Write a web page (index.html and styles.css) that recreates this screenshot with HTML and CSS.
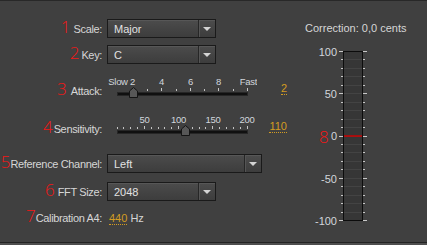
FILE: index.html
```html
<!DOCTYPE html>
<html>
	<head>
		<title>Tuner Settings</title>
		<link rel="stylesheet" href="styles.css">
	</head>
	<body>
		<div class="panel">
			<div class="form">
				<div class="row selRow r1">
					<div class="lbl"><span class="num">1</span>Scale:</div>
					<div class="select short"><span class="selText">Major</span><span class="selBtn"></span></div>
				</div>
				<div class="row selRow r2">
					<div class="lbl"><span class="num">2</span>Key:</div>
					<div class="select short"><span class="selText">C</span><span class="selBtn"></span></div>
				</div>
				<div class="row sliderRow r3">
					<div class="lbl"><span class="num">3</span>Attack:</div>
					<svg class="slider" id="attack" width="150" height="26">
						<text x="28" y="12" text-anchor="end">Slow 2</text>
						<text x="54.5" y="12" text-anchor="middle">4</text>
						<text x="83.5" y="12" text-anchor="middle">6</text>
						<text x="111.5" y="12" text-anchor="middle">8</text>
						<text x="141.5" y="12" text-anchor="middle">Fast</text>
						<g class="ticks"></g>
						<rect class="track" x="10.5" y="19.5" width="130" height="3"></rect>
						<polygon class="thumb" points="22.5,24.5 22.5,18 26.5,14.5 30.5,18 30.5,24.5"></polygon>
					</svg>
					<div class="val"><span>2</span></div>
				</div>
				<div class="row sliderRow r4">
					<div class="lbl"><span class="num">4</span>Sensitivity:</div>
					<svg class="slider" id="sens" width="150" height="26">
						<text x="37.5" y="12" text-anchor="middle">50</text>
						<text x="71.5" y="12" text-anchor="middle">100</text>
						<text x="106" y="12" text-anchor="middle">150</text>
						<text x="140" y="12" text-anchor="middle">200</text>
						<g class="ticks"></g>
						<rect class="track" x="10.5" y="19.5" width="130" height="3"></rect>
						<polygon class="thumb" points="74.5,24.5 74.5,18 78.5,14.5 82.5,18 82.5,24.5"></polygon>
					</svg>
					<div class="val"><span>110</span></div>
				</div>
				<div class="row selRow r5">
					<div class="lbl"><span class="num">5</span>Reference Channel:</div>
					<div class="select wide"><span class="selText">Left</span><span class="selBtn"></span></div>
				</div>
				<div class="row selRow r6">
					<div class="lbl"><span class="num">6</span>FFT Size:</div>
					<div class="select short"><span class="selText">2048</span><span class="selBtn"></span></div>
				</div>
				<div class="row calRow r7">
					<div class="lbl"><span class="num">7</span>Calibration A4:</div>
					<div class="cal"><span class="calVal">440</span> Hz</div>
				</div>
			</div>

			<div class="side">
				<div class="correction">Correction: 0,0 cents</div>
				<svg class="meter" id="meter" width="80" height="190">
					<rect class="meterBox" x="43.5" y="8.5" width="19" height="169"></rect>
					<g class="meterLines"></g>
					<g class="meterTicks"></g>
					<line class="zero" x1="44" y1="93" x2="62" y2="93"></line>
					<text class="mlabel" x="37" y="9">100</text>
					<text class="mlabel" x="37" y="51">50</text>
					<text class="mlabel" x="37" y="93">0</text>
					<text class="mlabel" x="37" y="135.5">-50</text>
					<text class="mlabel" x="37" y="177.5">-100</text>
					<text class="mnum" x="19" y="100">8</text>
				</svg>
			</div>
		</div>

		<script>
			var NS = "http://www.w3.org/2000/svg";

			function addLine(g, x1, y1, x2, y2) {
				var l = document.createElementNS(NS, "line");
				l.setAttribute("x1", x1);
				l.setAttribute("y1", y1);
				l.setAttribute("x2", x2);
				l.setAttribute("y2", y2);
				g.appendChild(l);
			}

			function half(n) {
				return Math.round(n - 0.5) + 0.5;
			}

			// attack: 1..10, ticks from 2
			var g = document.querySelector("#attack .ticks");
			for (var v = 2; v <= 10; v++) {
				var x = half(26.25 + (v - 2) * 14.25);
				addLine(g, x, v % 2 == 0 && v > 2 ? 15 : 16, x, 18);
			}

			// sensitivity: 10..200 step 10
			g = document.querySelector("#sens .ticks");
			for (var v = 10; v <= 200; v += 10) {
				var x = half(10 + (v - 10) * 130 / 190);
				addLine(g, x, v % 50 == 0 ? 15 : 16, x, 18);
			}

			// meter: -100..100, tick every 10
			var lines = document.querySelector("#meter .meterLines");
			var ticks = document.querySelector("#meter .meterTicks");
			for (var i = 0; i <= 20; i++) {
				var y = half(8.5 + i * 8.45);
				var major = i % 5 == 0;
				if (i > 0 && i < 20) addLine(lines, 44, y, 62, y);
				addLine(ticks, major ? 39 : 41, y, 43, y);
				addLine(ticks, 63, y, major ? 67 : 65, y);
			}
		</script>
	</body>
</html>
```

FILE: styles.css
```css
body {
	margin: 0;
	width: 427px;
	height: 245px;
	overflow: hidden;
	background-color: #4e4e4e;
	font-family: "Liberation Sans", Arial, sans-serif;
	font-size: 11px;
	color: #d6d6d6;
}

.panel {
	display: flex;
	height: 241px;
	background-color: #404040;
	border-top: 1px solid #282828;
	border-bottom: 1px solid #232323;
}

.form {
	width: 300px;
	flex-shrink: 0;
	padding-top: 18px;
}

.row {
	display: flex;
	align-items: center;
}

.lbl {
	width: 102px;
	flex-shrink: 0;
	margin-right: 5px;
	text-align: right;
	line-height: 14px;
	letter-spacing: -0.35px;
	white-space: nowrap;
}

.num {
	color: #f41616;
	font-family: "Open Sans", sans-serif;
	font-weight: 300;
	font-size: 17px;
	letter-spacing: 0;
	line-height: 0;
	margin-right: 3px;
}

.r2 .num { margin-right: 2px; }
.r3 .num { margin-right: 4px; }
.r4 .num { margin-right: 1px; }
.r5 .num { margin-right: 0; }
.r7 .num { margin-right: 0; }

.selRow { height: 19px; }
.r2 { margin-top: 7px; }
.r3 { margin-top: 9px; }
.r4 { margin-top: 12px; }
.r5 { margin-top: 17px; }
.r6 { margin-top: 9px; }
.r7 { margin-top: 8px; height: 17px; }

/* dropdowns */
.select {
	height: 19px;
	box-sizing: border-box;
	display: flex;
	align-items: center;
	border: 1px solid #1a1a1a;
	background: linear-gradient(#4c4c4c, #444444 50%, #3d3d3d);
	box-shadow: inset 0 1px 0 #575757;
	color: #e2e2e2;
}

.select.short { width: 109px; }
.select.wide { width: 155px; }

.selText {
	flex: 1;
	padding-left: 6px;
}

.selBtn {
	width: 16px;
	height: 100%;
	display: flex;
	align-items: center;
	justify-content: center;
	border-left: 1px solid #262626;
	box-shadow: inset 1px 0 0 #555555;
}

.selBtn::after {
	content: "";
	border-left: 4px solid transparent;
	border-right: 4px solid transparent;
	border-top: 4px solid #d4d4d4;
}

/* sliders */
.sliderRow {
	height: 26px;
	align-items: flex-start;
}

.sliderRow .lbl { margin-top: 11px; }

.slider text {
	font-family: "Liberation Sans", Arial, sans-serif;
	font-size: 9.5px;
	letter-spacing: -0.3px;
	fill: #d2d6dc;
}

.slider .ticks line {
	stroke: #c4c4c4;
	stroke-width: 1;
}

.track {
	fill: #101010;
	stroke: #262626;
}

.thumb {
	fill: #575757;
	stroke: #141414;
}

.val {
	width: 30px;
	margin-top: 9px;
	text-align: right;
	line-height: 12px;
}

.val span,
.calVal {
	color: #d39c22;
	border-bottom: 1px dotted #d39c22;
}

.cal {
	margin-left: 2px;
	line-height: 12px;
}

/* correction meter */
.side {
	width: 127px;
	padding-top: 20px;
}

.correction {
	margin-left: 5px;
	line-height: 14px;
	white-space: nowrap;
}

.meter {
	display: block;
	margin-top: 8px;
}

.meterBox {
	fill: #363636;
	stroke: #0c0c0c;
}

.meterLines line {
	stroke: #434343;
}

.meterTicks line {
	stroke: #c8c8c8;
}

.zero {
	stroke: #cc0000;
	stroke-width: 1.5;
}

.mlabel {
	font-family: "Liberation Sans", Arial, sans-serif;
	font-size: 11px;
	fill: #d2d6dc;
	text-anchor: end;
	dominant-baseline: central;
}

.mnum {
	font-family: "Open Sans", sans-serif;
	font-weight: 300;
	font-size: 17px;
	fill: #f41616;
}
```
